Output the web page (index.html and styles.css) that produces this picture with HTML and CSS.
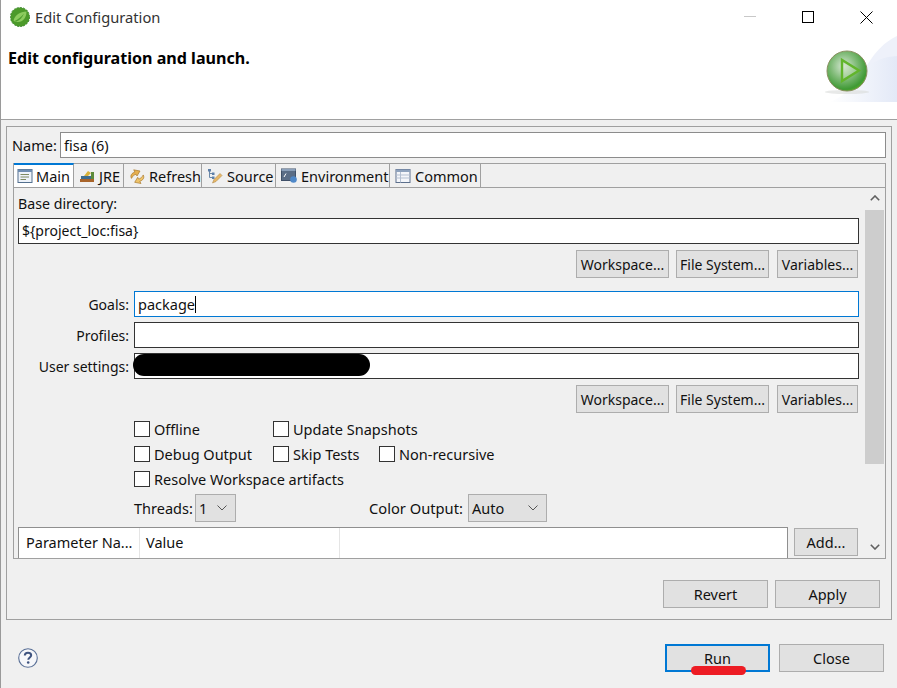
FILE: index.html
```html
<!DOCTYPE html>
<html lang="en">
<head>
<meta charset="utf-8">
<title>Edit Configuration</title>
<link rel="stylesheet" href="styles.css">
</head>
<body>
<div class="window">
  <div class="titlebar">
    <svg class="app-icon" viewBox="0 0 20 20" width="20" height="20">
      <circle cx="10" cy="10" r="9.6" fill="#4c9a2a"/>
      <circle cx="10" cy="10" r="9.6" fill="none" stroke="#2f7d22" stroke-width="0.8" stroke-dasharray="2 1.2"/>
      <path d="M3.5 13.5C5 7.5 10 5 16.5 4.5 16.5 10.5 13 15 8 15 6 15 4.500 14.500 3.500 13.500Z" fill="#8ccb5e"/>
      <path d="M4.500 14C8 12.500 11 10 14 6.500 12.500 10.500 9.500 13.500 6 14.800Z" fill="#4f9f2f"/>
    </svg>
    <span class="title">Edit Configuration</span>
    <div class="win-controls">
      <svg class="ctl" viewBox="0 0 12 12" width="12" height="12"><path d="M0 5.500H12" stroke="#c8c8c8" stroke-width="1"/></svg>
      <svg class="ctl" viewBox="0 0 12 12" width="12" height="12"><rect x="0.500" y="0.500" width="11" height="11" fill="none" stroke="#000"/></svg>
      <svg class="ctl" viewBox="0 0 13 13" width="13" height="13"><path d="M0.500 0.500L12.500 12.500M12.500 0.500L0.500 12.500" stroke="#000" stroke-width="1"/></svg>
    </div>
  </div>
  <div class="banner">
    <h1 class="banner-text">Edit configuration and launch.</h1>
    <svg class="banner-art" viewBox="0 0 80 68" width="80" height="68">
      <defs>
        <linearGradient id="wash" x1="0" y1="0" x2="1" y2="0">
          <stop offset="0" stop-color="#ffffff"/><stop offset="1" stop-color="#e3e9f7"/>
        </linearGradient>
        <radialGradient id="ball" cx="0.42" cy="0.38" r="0.68">
          <stop offset="0" stop-color="#d8e8d6"/><stop offset="0.45" stop-color="#84bd7c"/><stop offset="0.85" stop-color="#3f9a34"/><stop offset="1" stop-color="#5fb81f"/>
        </radialGradient>
      </defs>
      <path d="M32 67C44 40 56 12 80 1V67Z" fill="#eef1fa"/>
      <path d="M46 36C58 24 68 22 80 21V67H12C30 62 38 44 46 36Z" fill="url(#wash)"/>
      <ellipse cx="30" cy="57" rx="22" ry="2" fill="#d8dbd8" opacity="0.6"/>
      <circle cx="30" cy="36" r="20" fill="url(#ball)" stroke="#8a8f60" stroke-width="1"/>
      <path d="M25 25V46L42 35.500Z" fill="#cfe6c4" fill-opacity="0.4" stroke="#62b52c" stroke-width="2.400" stroke-linejoin="miter"/>
    </svg>
  </div>
  <div class="body">
    <section class="panel">
      <div class="name-row">
        <label class="name-label">Name:</label>
        <div class="field field-grey name-field">fisa (6)</div>
      </div>
      <div class="tabs">
        <div class="tab tab-active tab-main">
          <svg class="tab-icon" viewBox="0 0 16 16"><rect x="1" y="1.500" width="14" height="13" fill="#eef3fa" stroke="#54708f"/><rect x="1" y="1.500" width="14" height="2.500" fill="#6f8db0"/><path d="M3.500 6.500H12M3.500 9H12M3.500 11.500H9" stroke="#7f8a60"/></svg>Main
        </div>
        <div class="tab tab-jre">
          <svg class="tab-icon" viewBox="0 0 16 16"><rect x="1" y="11" width="14" height="3" fill="#a8642a"/><rect x="2" y="8" width="10" height="3" fill="#3d6d8f"/><path d="M5 8L9 3l3 2-3 3Z" fill="#d8b23a"/><rect x="12" y="4" width="3" height="7" fill="#5d8a3a"/></svg>JRE
        </div>
        <div class="tab tab-refresh">
          <svg class="tab-icon" viewBox="0 0 16 16"><path d="M2 10C2 6.500 5 5.500 8 6V3.500L13 7.500 8 10.500V8.500C6 8 4.500 8.500 2 10Z" fill="#e6b050" stroke="#a8772a" stroke-width="0.600" transform="rotate(-28 8 8) translate(0 -2.500)"/><path d="M14 7.500C14 11 11 12 8 11.500V14L3 10 8 7V9C10 9.500 11.500 9 14 7.500Z" fill="#eec46a" stroke="#a8772a" stroke-width="0.600" transform="rotate(-28 8 8) translate(0 2.500)"/></svg>Refresh
        </div>
        <div class="tab tab-source">
          <svg class="tab-icon" viewBox="0 0 16 16"><path d="M2.500 1.500V9.500H5M2.500 5.500H5" stroke="#6a88a8" fill="none"/><rect x="1" y="1" width="3" height="2.500" fill="#5d7fa8"/><rect x="5" y="4.500" width="2.500" height="2.500" fill="#5d7fa8"/><rect x="5" y="8.500" width="2.500" height="2.500" fill="#5d7fa8"/><path d="M5.500 15L7 11.500 13 5.500 15 7.500 9 13.500Z" fill="#e8b868" stroke="#b08a4a" stroke-width="0.600"/></svg>Source
        </div>
        <div class="tab tab-env">
          <svg class="tab-icon" viewBox="0 0 16 16"><rect x="0.500" y="1" width="14" height="11.500" fill="#5a6d86" stroke="#3f5068"/><rect x="0.500" y="1" width="14" height="2" fill="#8ba0ba"/><path d="M3 9L5 5.500" stroke="#fff"/><circle cx="12.500" cy="11.500" r="3.300" fill="#4f88c8"/></svg>Environment
        </div>
        <div class="tab tab-common">
          <svg class="tab-icon" viewBox="0 0 16 16"><rect x="1" y="1.500" width="14" height="13" fill="#f4f6fa" stroke="#5c6f8c"/><rect x="1" y="1.500" width="14" height="2.500" fill="#8ea2bd"/><path d="M1 7H15M1 10H15M5.500 4V14.500" stroke="#b3bfd1"/></svg>Common
        </div>
      </div>
      <div class="folder">
        <div class="form">
          <div class="base-label">Base directory:</div>
          <div class="field field-dark base-field">${project_loc:fisa}</div>
          <div class="button-row">
            <button class="btn btn-ws">Workspace...</button>
            <button class="btn btn-fs">File System...</button>
            <button class="btn btn-var">Variables...</button>
          </div>
          <div class="form-row row-goals">
            <label class="row-label">Goals:</label>
            <div class="field field-focus row-field">package<span class="caret"></span></div>
          </div>
          <div class="form-row row-profiles">
            <label class="row-label">Profiles:</label>
            <div class="field field-dark row-field"></div>
          </div>
          <div class="form-row row-settings">
            <label class="row-label">User settings:</label>
            <div class="field field-dark row-field"><span class="redact"></span></div>
          </div>
          <div class="button-row button-row-2">
            <button class="btn btn-ws">Workspace...</button>
            <button class="btn btn-fs">File System...</button>
            <button class="btn btn-var">Variables...</button>
          </div>
          <div class="checks">
            <div class="check-line">
              <span class="check col-a"><i class="box"></i>Offline</span>
              <span class="check"><i class="box"></i>Update Snapshots</span>
            </div>
            <div class="check-line">
              <span class="check col-a"><i class="box"></i>Debug Output</span>
              <span class="check col-b"><i class="box"></i>Skip Tests</span>
              <span class="check"><i class="box"></i>Non-recursive</span>
            </div>
            <div class="check-line">
              <span class="check"><i class="box"></i>Resolve Workspace artifacts</span>
            </div>
          </div>
          <div class="combo-row">
            <span class="combo-label">Threads:</span>
            <span class="combo combo-threads">1<svg class="chev" viewBox="0 0 10 6" width="10" height="6"><path d="M0.500 0.500L5 5 9.500 0.500" fill="none" stroke="#555"/></svg></span>
            <span class="combo-label color-label">Color Output:</span>
            <span class="combo combo-color">Auto<svg class="chev" viewBox="0 0 10 6" width="10" height="6"><path d="M0.500 0.500L5 5 9.500 0.500" fill="none" stroke="#555"/></svg></span>
          </div>
          <div class="table-row">
            <div class="table">
              <div class="th th-name">Parameter Na...</div>
              <div class="th th-value">Value</div>
            </div>
            <button class="btn btn-add">Add...</button>
          </div>
        </div>
        <div class="scrollbar">
          <svg class="arrow" viewBox="0 0 10 6" width="10" height="6"><path d="M0.800 5.200L5 1 9.200 5.200" fill="none" stroke="#606060" stroke-width="1.600"/></svg>
          <div class="thumb"></div>
          <div class="track"></div>
          <svg class="arrow" viewBox="0 0 10 6" width="10" height="6"><path d="M0.800 0.800L5 5 9.200 0.800" fill="none" stroke="#606060" stroke-width="1.600"/></svg>
        </div>
      </div>
      <div class="panel-actions">
        <button class="btn btn-wide">Revert</button>
        <button class="btn btn-wide">Apply</button>
      </div>
    </section>
    <div class="footer">
      <svg class="help" viewBox="0 0 20 20" width="20" height="20">
        <circle cx="10" cy="10" r="9.300" fill="#f6f7fa" stroke="#5a7097" stroke-width="1.100"/>
        <path d="M6.800 7.600C6.800 5.600 8.200 4.700 10 4.700 11.900 4.700 13.200 5.700 13.200 7.300 13.200 9.400 10.300 9.500 10.300 11.800" fill="none" stroke="#3f5480" stroke-width="2"/>
        <circle cx="10.200" cy="14.500" r="1.300" fill="#3f5480"/>
      </svg>
      <div class="footer-actions">
        <button class="btn btn-wide btn-default">Run<span class="mark"></span></button>
        <button class="btn btn-wide">Close</button>
      </div>
    </div>
  </div>
</div>
</body>
</html>
```
FILE: styles.css
```css
* { box-sizing: border-box; }
html, body { margin: 0; padding: 0; }
body {
  width: 897px;
  height: 688px;
  overflow: hidden;
  background: #f0f0f0;
  color: #111;
  font-family: "Noto Sans", "Open Sans", sans-serif;
  font-size: 14.5px;
}
.window {
  width: 897px;
  height: 688px;
  border-left: 1px solid #9a9a9a;
  display: flex;
  flex-direction: column;
}
.titlebar {
  height: 35px;
  background: #fff;
  display: flex;
  align-items: center;
  padding: 0 0 1px 9px;
  flex: none;
}
.app-icon { flex: none; }
.title { margin-left: 5px; color: #333; font-size: 14.7px; }
.win-controls {
  margin-left: auto;
  display: flex;
  align-items: center;
  padding-right: 24px;
  gap: 46px;
}
.banner {
  height: 85px;
  background: #fff;
  border-bottom: 1px solid #a0a0a0;
  display: flex;
  justify-content: space-between;
  align-items: flex-start;
  flex: none;
}
.banner-text {
  margin: 11px 0 0 7px;
  font-size: 16.1px;
  font-weight: 700;
  line-height: 24px;
  color: #000;
}
.body {
  flex: 1;
  padding: 6px 5px 0;
  display: flex;
  flex-direction: column;
}
.panel {
  height: 494px;
  border: 1px solid #a0a0a0;
  padding: 5px 5px 0 5px;
}
.name-row { display: flex; align-items: center; height: 26px; }
.name-label { width: 48px; }
.name-field { flex: 1; height: 26px; }
.field {
  background: #fff;
  display: flex;
  align-items: center;
  padding-left: 3px;
  line-height: 20px;
  position: relative;
}
.field-grey { border: 1px solid #8c8c8c; }
.field-dark { border: 1px solid #333; }
.field-focus { border: 1px solid #0078d4; }
.caret { width: 1px; height: 17px; background: #000; }
.tabs {
  margin: 5px 0 0 1px;
  height: 25px;
  display: flex;
  border: 1px solid #a0a0a0;
  width: 873px;
}
.tab {
  height: 23px;
  display: flex;
  align-items: center;
  border-right: 1px solid #a0a0a0;
  padding-left: 5px;
  white-space: nowrap;
  flex: none;
}
.tab-active {
  background: #fff;
  border-top: 2px solid #0078d4;
  margin-top: -1px;
  height: 24px;
  padding-left: 3px;
}
.tab-main { width: 60px; }
.tab-jre { width: 50px; }
.tab-refresh { width: 78px; }
.tab-source { width: 74px; }
.tab-env { width: 114px; }
.tab-common { width: 91px; }
.tab-icon { width: 16px; height: 16px; margin-right: 4px; flex: none; }
.tab-active .tab-icon { margin-right: 3px; }
.folder {
  width: 873px;
  margin-left: 1px;
  height: 371px;
  border: 1px solid #a0a0a0;
  border-top: 0;
  display: flex;
  padding-left: 4px;
}
.form { width: 847px; flex: none; }
.base-label { height: 30px; padding-top: 6px; line-height: 20px; font-size: 14.2px; }
.field.base-field { width: 841px; height: 26px; font-size: 14px; }
.button-row {
  display: flex;
  justify-content: flex-end;
  width: 840px;
  margin-top: 6px;
  height: 28px;
}
.button-row .btn { font-size: 14px; padding-top: 1px; }
.button-row .btn-fs { margin: 0 8px 0 7px; }
.btn {
  font: inherit;
  color: #111;
  background: #e1e1e1;
  border: 1px solid #adadad;
  height: 28px;
  padding: 0;
  line-height: 24px;
  display: block;
  flex: none;
}
.btn-ws { width: 93px; }
.btn-fs { width: 93px; }
.btn-var { width: 81px; }
.form-row { display: flex; align-items: center; height: 26px; margin-top: 5px; }
.row-goals { margin-top: 13px; }
.row-label { width: 112px; text-align: right; padding-right: 1px; flex: none; font-size: 14px; }
.row-field { width: 725px; height: 26px; flex: none; margin-left: 4px; }
.redact {
  position: absolute;
  left: -2px;
  top: 0;
  width: 237px;
  height: 22px;
  border-radius: 11px;
  background: #000;
}
.checks { padding-left: 116px; margin-top: 3px; }
.check-line { display: flex; height: 25px; align-items: center; }
.check { display: flex; align-items: center; white-space: nowrap; }
.col-a { width: 139px; }
.col-b { width: 106px; }
.box {
  width: 16px;
  height: 16px;
  background: #fff;
  border: 1px solid #333;
  margin-right: 4px;
  flex: none;
}
.combo-row { display: flex; align-items: center; height: 28px; margin-top: 3px; padding-left: 116px; }
.combo-label { width: 61px; white-space: nowrap; }
.color-label { width: 99px; margin-left: 133px; font-size: 14.7px; }
.combo {
  display: flex;
  align-items: center;
  justify-content: space-between;
  height: 28px;
  background: #e1e1e1;
  border: 1px solid #adadad;
  padding: 0 8px 0 3px;
  flex: none;
}
.combo-threads { width: 41px; }
.combo-color { width: 79px; }
.table-row { display: flex; margin-top: 5px; height: 31px; }
.table {
  width: 770px;
  height: 31px;
  background: #fff;
  border: 1px solid #8f8f8f;
  border-bottom: 0;
  display: flex;
  align-items: center;
}
.th {
  height: 100%;
  display: flex;
  align-items: center;
  border-right: 1px solid #e5e5e5;
  padding-bottom: 2px;
  white-space: nowrap;
}
.th-name { width: 121px; padding-left: 7px; }
.th-value { width: 200px; padding-left: 6px; }
.btn-add { width: 64px; margin: 1px 0 0 6px; }
.scrollbar {
  width: 19px;
  background: #f0f0f0;
  display: flex;
  flex-direction: column;
  align-items: center;
  padding-top: 7px;
}
.arrow { flex: none; }
.thumb { width: 19px; height: 254px; margin-top: 9px; background: #cdcdcd; flex: none; }
.track { flex: 1; }
.scrollbar .arrow:last-child { margin-bottom: 8px; }
.panel-actions {
  display: flex;
  justify-content: flex-end;
  gap: 7px;
  margin-top: 21px;
  padding-right: 6px;
}
.btn-wide { width: 105px; }
.footer {
  display: flex;
  align-items: center;
  justify-content: space-between;
  margin-top: 24px;
  padding-left: 12px;
  padding-right: 8px;
}
.footer-actions { display: flex; gap: 9px; }
.btn-default { border: 2px solid #0078d4; position: relative; }
.mark {
  position: absolute;
  left: 24px;
  bottom: -5px;
  width: 55px;
  height: 9px;
  border-radius: 5px;
  background: #ed1c24;
}
```
